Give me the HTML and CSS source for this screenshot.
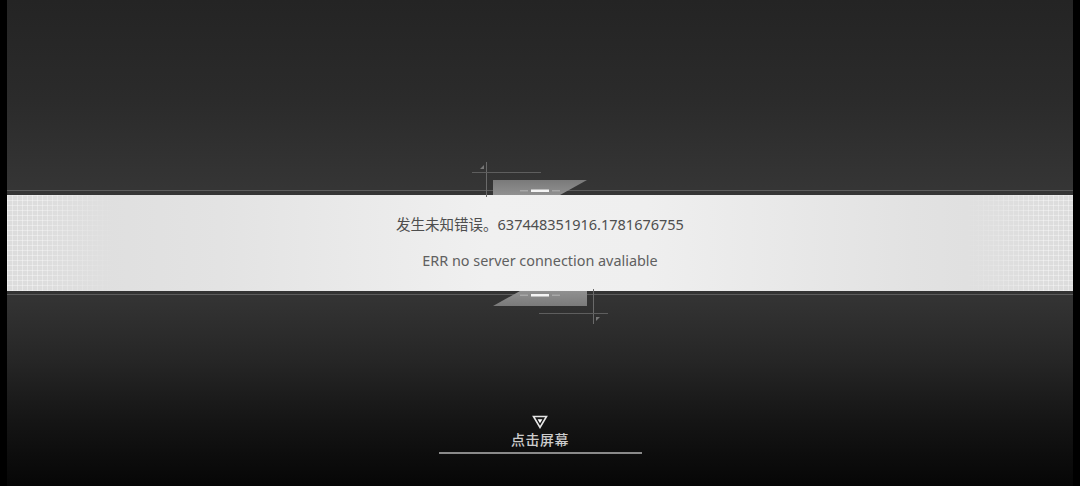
FILE: index.html
```html
<!DOCTYPE html>
<html lang="zh">
<head>
<meta charset="utf-8">
<title>错误</title>
<link rel="stylesheet" href="styles.css">
</head>
<body>
<div class="frame">
  <div class="screen">
    <div class="top-area"></div>
    <div class="rule"></div>
    <div class="band">
      <p class="msg-main">发生未知错误。637448351916.1781676755</p>
      <p class="msg-sub">ERR no server connection avaliable</p>
    </div>
    <div class="rule rule-bottom"></div>
    <div class="bottom-area">
      <div class="prompt">
        <svg class="tri" width="16" height="14" viewBox="0 0 16 14">
          <path d="M1.5 1.5 H14.5 L8 12.5 Z" fill="none" stroke="#e6e6e6" stroke-width="1.6" stroke-linejoin="miter"/>
          <path d="M5.6 4.2 H10.4 L8 8.2 Z" fill="#ffffff"/>
        </svg>
        <span class="prompt-text">点击屏幕</span>
        <div class="prompt-line"></div>
      </div>
    </div>
    <svg class="deco" width="140" height="176" viewBox="0 0 140 176">
      <defs>
        <linearGradient id="gt" x1="0" y1="0" x2="0" y2="1">
          <stop offset="0" stop-color="#7a7a7a"/>
          <stop offset="1" stop-color="#909090"/>
        </linearGradient>
        <linearGradient id="gb" x1="0" y1="1" x2="0" y2="0">
          <stop offset="0" stop-color="#7a7a7a"/>
          <stop offset="1" stop-color="#909090"/>
        </linearGradient>
      </defs>
      <!-- top -->
      <line x1="16.5" y1="7" x2="16.5" y2="42" stroke="#6a6a6a" stroke-width="1"/>
      <line x1="2" y1="17.5" x2="71" y2="17.5" stroke="#5e5e5e" stroke-width="1"/>
      <path d="M10 14 L14 10 L14 14 Z" fill="#777"/>
      <polygon points="23,25 117,25 90,40 23,40" fill="url(#gt)"/>
      <rect x="61" y="34.5" width="18" height="2.5" fill="#f4f4f4"/>
      <rect x="50" y="35" width="8" height="1.5" fill="#a8a8a8"/>
      <rect x="82" y="35" width="8" height="1.5" fill="#a8a8a8"/>
      <!-- bottom -->
      <line x1="123.5" y1="134" x2="123.5" y2="169" stroke="#6a6a6a" stroke-width="1"/>
      <line x1="69" y1="158.5" x2="138" y2="158.5" stroke="#5e5e5e" stroke-width="1"/>
      <path d="M130 162 L126 166 L126 162 Z" fill="#777"/>
      <polygon points="117,151 23,151 50,136 117,136" fill="url(#gb)"/>
      <rect x="61" y="139" width="18" height="2.5" fill="#f4f4f4"/>
      <rect x="50" y="139.5" width="8" height="1.5" fill="#a8a8a8"/>
      <rect x="82" y="139.5" width="8" height="1.5" fill="#a8a8a8"/>
    </svg>
  </div>
</div>
</body>
</html>
```

FILE: styles.css
```css
* { box-sizing: border-box; }
html, body {
  margin: 0;
  padding: 0;
  background: #000;
}
.frame {
  width: 1080px;
  height: 486px;
  padding: 0 7px;
  background: #000;
  overflow: hidden;
}
.screen {
  position: relative;
  width: 1066px;
  height: 486px;
  display: flex;
  flex-direction: column;
  background: linear-gradient(to bottom,
    #242424 0px,
    #2b2b2b 100px,
    #353535 188px,
    #333333 300px,
    #262626 360px,
    #151515 420px,
    #060606 486px);
  font-family: "Noto Sans", "Noto Sans CJK SC", sans-serif;
}
.top-area {
  height: 190px;
  flex: none;
}
.rule {
  height: 1px;
  flex: none;
  background: #5c5c5c;
  margin-bottom: 4px;
}
.rule-bottom {
  margin-bottom: 0;
  margin-top: 3px;
}
.band {
  position: relative;
  height: 96px;
  flex: none;
  display: flex;
  flex-direction: column;
  align-items: center;
  background: linear-gradient(to right,
    #dcdcdc 0%,
    #e3e3e3 20%,
    #f0f0f0 45%,
    #efefef 60%,
    #e2e2e2 85%,
    #dcdcdc 100%);
  overflow: hidden;
}
.band::before,
.band::after {
  content: "";
  position: absolute;
  top: 0;
  bottom: 0;
  width: 110px;
  background-image:
    linear-gradient(to right, rgba(255,255,255,0.35) 1px, transparent 1px),
    linear-gradient(to bottom, rgba(255,255,255,0.35) 1px, transparent 1px);
  background-size: 5px 5px;
}
.band::before {
  left: 0;
  -webkit-mask-image: linear-gradient(to right, #000 30%, transparent 100%);
  mask-image: linear-gradient(to right, #000 30%, transparent 100%);
}
.band::after {
  right: 0;
  -webkit-mask-image: linear-gradient(to left, #000 30%, transparent 100%);
  mask-image: linear-gradient(to left, #000 30%, transparent 100%);
}
.msg-main {
  margin: 18px 0 0;
  font-size: 14.5px;
  line-height: 22px;
  color: #4e4e4e;
  position: relative;
  z-index: 1;
}
.msg-sub {
  margin: 15px 0 0;
  font-size: 14.4px;
  line-height: 22px;
  color: #606060;
  position: relative;
  z-index: 1;
}
.bottom-area {
  flex: 1;
  display: flex;
  justify-content: center;
  padding-top: 120px;
}
.prompt {
  display: flex;
  flex-direction: column;
  align-items: center;
  width: 203px;
}
.tri {
  display: block;
}
.prompt-text {
  margin-top: 1px;
  font-size: 14px;
  line-height: 20px;
  font-weight: 500;
  color: #cccccc;
  letter-spacing: 0.5px;
}
.prompt-line {
  margin-top: 2px;
  width: 203px;
  height: 2px;
  background: #8a8a8a;
}
.deco {
  position: absolute;
  left: 463px;
  top: 155px;
  pointer-events: none;
}
```
